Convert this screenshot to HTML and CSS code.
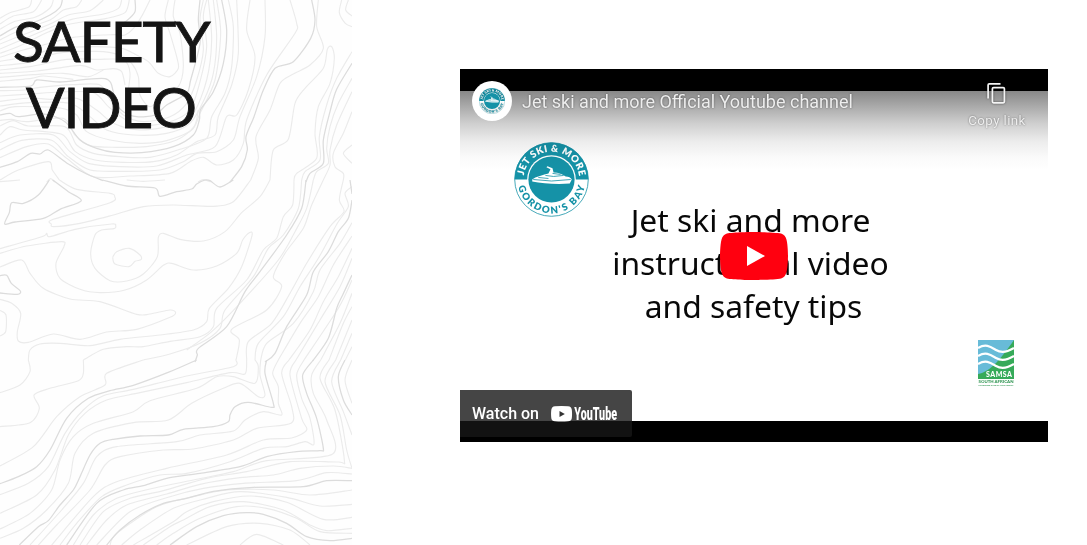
FILE: index.html
```html
<!DOCTYPE html>
<html lang="en">
<head>
<meta charset="utf-8">
<title>Safety Video</title>
<link rel="stylesheet" href="styles.css">
</head>
<body>
<main class="page">
  <section class="intro">
    <svg class="contours" id="contours" viewBox="0 0 1056 1635" aria-hidden="true"></svg>
    <h1 class="heading"><span class="heading-top">SAFETY</span><span class="heading-bottom">VIDEO</span></h1>
  </section>
  <section class="media">
    <div class="player">
      <div class="slide">
        <p class="slide-text"><span>Jet ski and more</span><span>instructional video</span><span class="slide-last">and safety tips</span></p>
      </div>
      <svg class="badge" viewBox="0 0 74 74">
        <defs><g id="seal">
          <circle cx="37" cy="37" r="36.3" fill="#fff" stroke="#1b94a8" stroke-width=".8"/>
          <path d="M.5 37a36.5 36.5 0 0 1 73 0z" fill="#1592a7"/>
          <circle cx="37" cy="37" r="24" fill="#fff"/><circle cx="37" cy="37" r="22.8" fill="#1592a7"/>
          <path d="M18 37l3-2 9-3 4-1 2-4-4-2 1-1 5 2 1 4c5 0 9 2 12 4 3 0 5 1 6 3l-2 4c-13 1-27 0-37-2z" fill="#fff"/>
          <path d="M19 37l18 1.500 19-1.500M31 33l8 1 10-1M24 35l10 1M38 31l8 1" fill="none" stroke="#1592a7" stroke-width=".8"/>
          <path id="arcTop" d="M9.5 37a27.5 27.5 0 0 1 55 0" fill="none"/>
          <path id="arcBottom" d="M3.5 37a33.5 33.5 0 0 0 67 0" fill="none"/>
          <text class="seal-text" fill="#fff"><textPath href="#arcTop" startOffset="4" textLength="79">JET SKI &amp; MORE</textPath></text>
          <text class="seal-text" fill="#1592a7"><textPath href="#arcBottom" startOffset="7" textLength="91">GORDON'S BAY</textPath></text>
        </g></defs>
        <use href="#seal"/>
      </svg>
      <svg class="samsa" viewBox="0 0 36 48">
        <path d="M0 0h36v39H0z" fill="#68bbd8"/>
        <path d="M36 0v39H0v-5C13 32 24 17 36 0z" fill="#36aa59"/>
        <g fill="none" stroke="#fff" stroke-width="2.2"><path d="M0 8c8-5 13-1 18 2s10 3 18-2"/><path d="M0 16c8-5 13-1 18 2s10 3 18-2"/><path d="M0 24c8-5 13-1 18 2s10 3 18-2"/></g>
        <text x="8" y="36.500" textLength="26" font-size="7" fill="#fff">SAMSA</text>
        <text x=".5" y="43" textLength="35" lengthAdjust="spacingAndGlyphs" font-size="4.2" fill="#329654">SOUTH AFRICAN</text>
        <text x=".5" y="46.200" textLength="35" lengthAdjust="spacingAndGlyphs" font-size="2.6" fill="#329654">MARITIME SAFETY AUTHORITY</text>
      </svg>
      <div class="shade"></div>
      <header class="topbar">
        <div class="avatar"><svg viewBox="0 0 74 74"><use href="#seal"/></svg></div>
        <div class="title">Jet ski and more Official Youtube channel</div>
        <div class="copy">
          <svg viewBox="0 0 36 36" fill="none" stroke="#f4f4f4" stroke-width="1.700"><path d="M21.500 8.800H10.300q-1.200 0-1.200 1.200v13.500"/><rect x="13.400" y="12.600" width="12" height="15.200" rx="1.200"/></svg>
          <span>Copy link</span>
        </div>
      </header>
      <svg class="play" viewBox="0 0 68 48"><path d="M66.52 7.74c-.78-2.93-2.49-5.41-5.42-6.19C55.79.13 34 0 34 0S12.21.13 6.9 1.55c-2.93.78-4.63 3.26-5.42 6.19C.06 13.05 0 24 0 24s.06 10.95 1.48 16.26c.78 2.93 2.49 5.41 5.42 6.19C12.21 47.87 34 48 34 48s21.79-.13 27.1-1.55c2.93-.78 4.64-3.26 5.42-6.19C67.94 34.95 68 24 68 24s-.06-10.95-1.48-16.26z" fill="#ff000f"/><path d="M45 24 27 14v20z" fill="#fff"/></svg>
      <div class="watch"><span>Watch on</span>
        <svg viewBox="0 0 68 24"><path d="M4 4.200Q10.500 3.600 17 4.200Q20.500 4.500 20.800 7.800Q21.300 12 20.800 16.200Q20.400 19 17 19.300Q10.500 19.900 4 19.300Q.7 19 .3 16.200Q-.2 12 .3 7.800Q.7 4.500 4 4.200z" fill="#fff"/><path d="M8.500 9v6l5.300-3z" fill="#333"/><text x="23.300" y="18.300" textLength="42.700" lengthAdjust="spacingAndGlyphs">YouTube</text></svg>
      </div>
    </div>
  </section>
</main>
<script src="contours.js"></script>
</body>
</html>
```
FILE: styles.css
```css
* { box-sizing: border-box; }
body { margin: 0; background: #fff; }
.page { display: flex; width: 1087px; height: 545px; overflow: hidden; }
.intro { position: relative; flex: 0 0 352px; height: 545px; background: #fefefe; }
.contours { position: absolute; inset: 0; width: 352px; height: 545px; }
.contours path { fill: none; stroke: #ebebeb; stroke-width: 3.4; }
.contours path.major { stroke: #dcdcdc; stroke-width: 3.8; }
.heading { position: relative; margin: 0; padding-top: 7px; font: 400 57px/66px Lato, sans-serif; color: #141414; -webkit-text-stroke: .9px #141414; }
.heading span { display: block; white-space: nowrap; }
.heading-top { padding-left: 13px; letter-spacing: -1.1px; }
.heading-bottom { padding-left: 26px; letter-spacing: -1.2px; }
.media { flex: 1; padding: 69px 0 0 108px; }
.player { position: relative; width: 588px; height: 373px; padding: 21.500px 0; background: #000; overflow: hidden; }
.slide { height: 330px; background: #fff; padding-top: 107px; }
.slide-text { margin: 0 0 0 -7px; text-align: center; font: 400 31.800px/43px "Noto Sans", sans-serif; color: #080808; }
.slide-text span { display: block; }
.slide-text .slide-last { padding-left: 6px; }
.badge { position: absolute; left: 54px; top: 73px; width: 75px; height: 75px; }
.seal-text { font: 800 9.600px Lato, sans-serif; }
.samsa { position: absolute; left: 518px; top: 271px; width: 36px; height: 48px; font-family: Lato, sans-serif; font-weight: 900; }
.shade { position: absolute; left: 0; right: 0; top: 21px; height: 80px; background: linear-gradient(#868686, #a9a9a9 20%, #cfcfcf 42%, #ececec 64%, #fafafa 84%, #fff); mix-blend-mode: multiply; }
.topbar { position: absolute; left: 0; right: 0; top: 0; height: 70px; display: flex; padding: 12px 12px 0; font-family: Roboto, sans-serif; color: #eee; text-shadow: 0 0 2px rgba(0,0,0,.5); }
.avatar { width: 40px; height: 40px; flex: none; border-radius: 50%; background: #fff; display: grid; place-items: center; }
.avatar svg { width: 26px; height: 26px; }
.title { margin-left: 10px; font-size: 18px; line-height: 42px; flex: 1; white-space: nowrap; }
.copy { width: 78px; display: flex; flex-direction: column; align-items: center; font-size: 13.300px; letter-spacing: .4px; line-height: 16px; white-space: nowrap; }
.copy svg { width: 36px; height: 36px; margin: -6px 0 2px; filter: drop-shadow(0 0 1px rgba(0,0,0,.5)); }
.play { position: absolute; left: 260px; top: 163px; width: 68px; height: 48px; }
.watch { position: absolute; left: 0; top: 321px; width: 172px; height: 47px; display: flex; align-items: center; padding-left: 12px; background: rgba(23,23,23,.8); border-radius: 0 2px 2px 0; color: #fff; font: 500 16px Roboto, sans-serif; white-space: nowrap; }
.watch span { width: 79px; }
.watch svg { width: 68px; height: 24px; fill: #fff; font: 900 17.500px Roboto, sans-serif; }
```
FILE: contours.js
```js
// Each entry is [vertical offset, major lines, minor lines]; points are x,y pairs.
const bands = [
  [0, [
    "0,108 45,82 90,72 150,45 180,22 187,0",
    "935,0 945,60 932,115 880,185 825,205 790,270 762,350 738,410 742,450 725,500 690,546",
    "0,262 92,258 110,240 180,246 315,236 340,275 345,305 370,335 410,350 465,345 500,315 560,280 572,240 600,130 595,60 600,0",
    "0,345 30,340 55,350 130,342 195,365 240,420 290,445 345,457 425,458 520,440 580,405 598,360 602,328 640,275 670,190 680,90 665,0",
    "0,502 52,485 92,460 120,462 145,450 205,492 260,522 310,542",
    "1056,190 1010,268 990,335 970,420 970,490 930,520 918,546",
    "405,0 405,35 380,62 350,80"
  ], [
    "0,55 30,38 85,22 95,0", "0,72 40,48 100,35 125,0", "0,88 45,64 105,52 150,24 160,0",
    "0,120 50,95 150,60 190,30 230,20 245,0", "0,132 50,112 150,72 205,45 270,32 310,0", "0,147 55,124 150,83 215,58 310,42 355,25 365,0", "0,160 60,137 145,96 210,72 320,55 375,38 388,0",
    "0,172 70,150 130,135 220,112 340,104 375,105 405,80 430,40 450,0", "0,184 80,170 160,148 280,140 365,145 400,160 445,185 475,220 510,230 535,205 530,170 510,100 495,50 505,0",
    "0,197 80,188 170,160 290,154 360,165 395,190 415,230 420,285 450,320 490,292 535,260 550,200 540,100 520,50 525,0",
    "0,210 90,200 200,178 290,178 370,180 390,220 380,300", "0,220 110,213 240,196 290,210 340,206 365,215 375,255",
    "0,232 100,224 190,220 265,230 310,210", "0,244 95,235 130,228 220,238",
    "0,272 75,270 120,262 220,254 300,255 330,300 370,345 430,365 510,350 560,310 590,240 610,150 600,60 610,0",
    "0,288 90,282 180,276 280,278 325,320 370,355 420,378 510,365 570,330 600,245 620,140 610,50 620,0",
    "0,304 90,294 150,298 230,295 290,330 340,370 420,390 520,376 580,340 620,240 635,120 625,0",
    "0,318 90,308 210,310 270,350 320,390 400,405 500,400 570,370 612,300 640,220 650,110 640,0",
    "0,333 45,320 180,324 230,345 260,395 330,420 420,430 500,422 575,390 600,340 645,240 662,100 650,0",
    "0,361 35,358 80,365 190,355 225,405 270,437 350,442 440,440 530,420 582,380 595,330",
    "0,378 40,362 85,378 195,380 230,435 280,460 360,470 450,472 540,448 620,415 635,350 675,280 695,200 700,80 685,0",
    "0,405 30,380 70,390 185,403 225,454 285,480 370,487 460,485 530,465 590,425 645,405 655,350 695,255 715,160 710,0",
    "0,428 60,405 160,405 210,455 265,490 360,500 470,498 560,465 645,440 680,350 710,345 745,270 765,170 740,90 750,0",
    "0,450 65,421 155,421 205,470 270,510 370,514 480,510 550,485 590,460 650,455 700,420 720,350 770,230 795,110 795,0",
    "0,473 80,440 145,432 200,475 280,530 390,528 510,520 570,485 610,472 650,495 700,480 730,430 740,360 800,225 885,100 890,70 870,0",
    "0,540 55,510 145,485 157,510 178,540", "752,540 775,475 768,410 810,330 840,250 880,222 930,195 970,145 950,80 955,0",
    "810,540 820,450 865,418 885,310 915,265 970,205 982,148 995,140 1003,175 990,250 955,320 945,400 950,475 890,520 882,540",
    "1056,155 1010,235 980,315 958,410 960,480 915,515 905,540",
    "1056,235 1015,310 990,380 980,445 985,490 950,515 940,540", "1056,275 1010,375 990,450 990,495 970,540",
    "1056,335 1030,400 1000,460 1005,500 1030,520 1030,540", "1056,435 1030,460 1056,490",
    "1025,0 1018,38 1036,70 1056,80", "1045,0 1037,30 1056,48", "140,546 152,536 165,546", "594,546 610,539 632,546"
  ]],
  [540, [
    "148,0 115,45 70,70 35,68 28,98 14,132 45,126 130,115 180,88 244,62 205,35 158,0", "308,0 380,18 465,24 480,49 530,35 575,27 590,12 615,0 630,2 660,21 700,0", "918,0 905,85 860,165 780,275 735,335 680,440 595,505 592,525 585,546",
    "1056,60 1045,115 1015,155 985,215 940,275 920,345 860,440 825,520 795,546", "1056,285 1028,345 1010,385 985,475 938,543",
    "0,287 20,286 34,310 61,333 52,343 0,339", "1050,0 1056,42"
  ], [
    "178,0 230,28 330,40 344,50 330,68 160,118 154,132 162,140 240,130 340,105 430,80 520,75 640,79 700,65 752,0",
    "810,0 780,50 725,98 675,155 610,183 540,178 490,160 475,172 472,230 430,282 380,303 330,302 285,265 272,220 285,165 305,150 342,146 347,138 335,132 225,148 150,170 140,160 125,170 0,206",
    "0,220 80,198 185,185 192,199 168,250 180,295 240,328 300,338 375,330 440,300 490,256 515,250 580,270 650,258 710,220 728,180 748,158 756,167 725,260 685,325 628,385 620,425 580,450 480,465 360,478 270,497 180,490 120,492 90,510 85,540",
    "338,232 350,215 388,205 420,225 423,239 405,244 387,260 345,252 338,232",
    "0,261 65,240 90,280 130,325 210,357 300,365 410,403 450,402 510,390 527,398 510,412 410,448 320,456 240,478 160,462 85,487 55,483 52,455 62,400 35,370 0,358",
    "0,391 18,405 17,455 0,468", "250,540 310,508 380,500 430,500 510,484 600,470 640,440 650,385 740,300 790,210 830,175 850,110 878,75 882,0",
    "430,540 510,522 600,490 660,445 675,390 760,290 805,205 850,165 895,85 905,0",
    "940,0 920,85 885,155 835,240 720,370 635,455 560,510", "970,0 935,75 910,145 855,220 820,290 845,320 800,390 695,448 718,480 708,540",
    "1030,0 1018,60 1032,95 990,140 920,250 870,340 815,430 745,485 740,540",
    "1056,20 1035,40 1045,80 1012,130 955,235 900,320 850,410 775,490 765,540",
    "1056,128 1020,190 960,270 940,335 880,430 800,490 782,540", "1056,168 1000,255 955,350 900,430 835,540",
    "1056,205 1015,290 970,365 930,450 867,540", "1056,235 1020,320 960,420 888,540", "1056,300 1015,385 912,540",
    "1056,340 1020,430 962,540","1056,380 1030,430 987,540","1056,420 1007,540","1056,460 1022,540","1056,500 1036,540","0,5 60,0","380,0 430,4 495,0"
  ]],
  [1080, [
    "0,371 55,350 110,320 150,270 200,175 265,115 330,92 400,76 510,35 590,0", "800,0 795,40 820,130 815,142 745,127 705,140 690,165 685,185 640,200 550,208 505,225 420,228 340,238 300,250 270,285 240,350 220,390 180,435 145,482 115,500 58,555",
    "940,0 908,45 920,100 950,175 970,265 960,272 890,275 800,290 720,320 600,340 500,355 430,377 370,390 290,430 200,555",
    "1035,0 1015,50 1030,120 1056,165", "1056,362 980,362 910,380 760,382 640,394 560,415 490,430 420,465 360,510 320,555",
    "1056,535 990,542 920,530 860,490 790,463 740,458 670,467 590,500 510,555"
  ], [
    "85,0 90,35 60,75 0,98", "250,0 250,40 235,62 150,85 102,105 118,145 90,188 0,200", "430,0 320,40 315,75 240,110 170,170 100,260 0,318",
    "708,0 700,20 560,48 400,88 310,107 250,150 195,220 145,320 85,370 0,404",
    "740,0 735,42 690,38 560,68 420,98 320,120 255,160 205,225 165,330 110,405 0,460",
    "765,0 775,20 765,70 700,50 650,50 590,85 450,122 400,155 280,190 220,230 180,300 155,390 90,460 0,507",
    "782,0 780,45 795,105 775,110 720,70 670,85 575,130 505,180 400,188 280,220 225,280 205,370 140,450 70,505 0,535",
    "835,0 818,40 835,80 835,130 845,165 790,155 735,180 700,213 600,225 530,245 350,260 290,290 250,370 185,450 90,555",
    "867,0 845,40 875,140 873,190 770,205 700,240 580,267 490,270 360,290 315,315 270,390 170,495 115,555",
    "888,0 870,45 905,175 920,210 875,234 790,240 680,285 500,325 350,365 280,410 155,555",
    "912,0 890,45 905,115 930,175 942,252 915,245 860,260 790,265 690,305 560,340 480,345 380,375 305,410 230,490 180,555",
    "962,0 935,45 940,100 980,180 998,282 800,302 700,335 580,360 450,387 350,415 280,465 220,555",
    "987,0 960,55 1005,150 1033,300 1015,306 870,305 740,335 620,355 490,392 390,415 310,455 240,555",
    "1007,0 975,65 1020,165 1040,270 1056,325", "1022,0 995,65 1030,155 1056,225", "1056,0 1035,60 1056,130",
    "1056,325 1000,318 900,325 820,345 720,353 600,373 500,402 380,435 320,480 260,555",
    "1056,342 980,338 890,362 730,370 610,385 510,410 390,455 290,555",
    "1056,390 930,405 820,390 680,390 580,410 470,440 350,520 330,555",
    "1056,433 960,438 860,412 720,395 620,415 520,445 420,510 365,555",
    "1056,472 970,478 860,427 750,408 640,425 560,455 520,485 400,555",
    "1056,505 980,512 930,495 850,450 730,425 630,440 550,480 510,500 430,555",
    "1056,520 960,515 890,475 800,445 710,440 600,475 520,520 470,555",
    "930,555 870,510 780,490 680,500 560,555", "720,555 770,523 850,555"
  ]]
];

// Draws a smooth curve through every point.
function curve(source) {
  const p = source.split(" ").map(pair => pair.split(",").map(Number));
  let d = `M${p[0]}`;
  for (let i = 0; i < p.length - 1; i++) {
    const a = p[i - 1] || p[i], b = p[i], c = p[i + 1], e = p[i + 2] || c;
    d += `C${b[0] + (c[0] - a[0]) / 7} ${b[1] + (c[1] - a[1]) / 7} ${c[0] - (e[0] - b[0]) / 7} ${c[1] - (e[1] - b[1]) / 7} ${c}`;
  }
  return d;
}
document.getElementById("contours").innerHTML = bands.map(([y, major, minor]) =>
  `<g transform="translate(0 ${y})">` +
  minor.map(l => `<path d="${curve(l)}"/>`).join("") +
  major.map(l => `<path class="major" d="${curve(l)}"/>`).join("") + "</g>").join("");
```
